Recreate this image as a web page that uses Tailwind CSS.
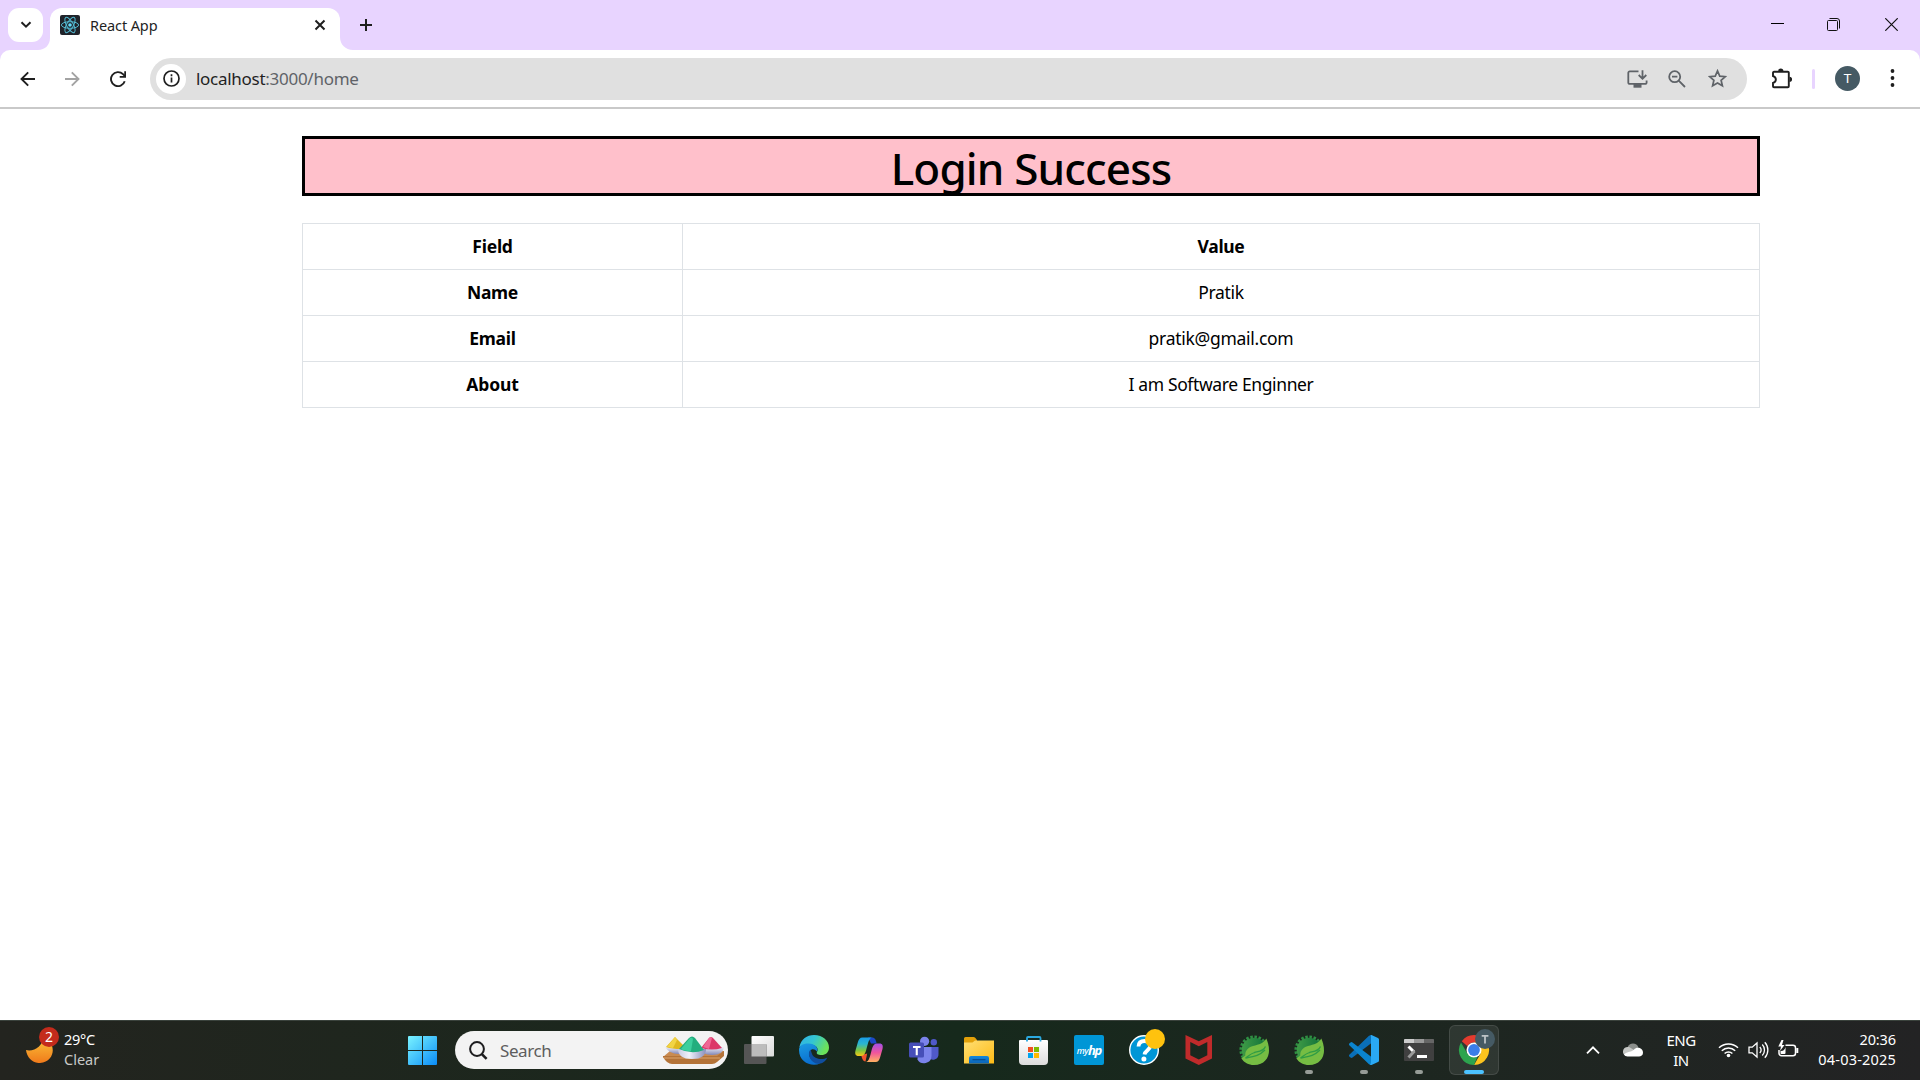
<!DOCTYPE html>
<html lang="en">
<head>
<meta charset="utf-8">
<title>React App</title>
<script src="https://cdn.jsdelivr.net/npm/@tailwindcss/browser@4"></script>
</head>
<body class="h-[1080px] w-[1920px] overflow-hidden bg-white font-['Noto_Sans','Open_Sans',sans-serif] text-black">
<div class="flex h-[1080px] flex-col">

  <!-- Tab strip -->
  <header class="flex h-[50px] bg-[#e8d4ff] text-[#1f1f1f]">
    <div class="flex w-[50px] flex-col pt-2">
      <button class="ml-2 flex h-[34px] w-[35px] items-center justify-center rounded-[11px] bg-white">
        <svg class="h-3 w-3" viewBox="0 0 12 12" fill="none" stroke="#1f1f1f" stroke-width="2"><path d="M1.5 3.2 6 7.7l4.500-4.500"/></svg>
      </button>
      <svg class="-mt-1 ml-auto h-3 w-3 shrink-0" viewBox="0 0 12 12"><path d="M12 0v12H0C7 12 12 7 12 0z" fill="#fff"/></svg>
    </div>
    <div class="mt-2 flex h-[42px] w-[290px] items-center rounded-t-[12px] bg-white pb-2 pl-[10px] pr-[14px]">
      <svg class="h-5 w-5" viewBox="0 0 20 20"><rect width="20" height="20" rx="2" fill="#20232a"/><g fill="none" stroke="#53b9d1" stroke-width="1"><ellipse cx="10" cy="10" rx="8.600" ry="3.300"/><ellipse cx="10" cy="10" rx="8.600" ry="3.300" transform="rotate(60 10 10)"/><ellipse cx="10" cy="10" rx="8.600" ry="3.300" transform="rotate(120 10 10)"/></g><circle cx="10" cy="10" r="1.800" fill="#61dafb"/></svg>
      <span class="mb-px ml-[10px] whitespace-nowrap text-[14.500px] leading-5 tracking-[-0.1px]">React App</span>
      <svg class="ml-auto h-3 w-3" viewBox="0 0 12 12" stroke="#1f1f1f" stroke-width="2"><path d="m1.500 1.500 9 9m0-9-9 9"/></svg>
    </div>
    <svg class="mt-[37px] h-[13px] w-[13px]" viewBox="0 0 13 13"><path d="M0 0v13h13C5.500 13 0 7.500 0 0z" fill="#fff"/></svg>
    <svg class="ml-[7px] mt-[19px] h-3 w-3" viewBox="0 0 12 12" stroke="#1f1f1f" stroke-width="2"><path d="M6 0v12M0 6h12"/></svg>
    <div class="ml-auto mr-[22px] mt-[18px] flex h-[13px] items-center">
      <svg class="h-[13px] w-[13px]" viewBox="0 0 13 13"><path d="M0 5h13v1H0z"/></svg>
      <svg class="ml-[43px] h-[13px] w-[13px]" viewBox="0 0 13 13" fill="none" stroke="#111"><rect x=".5" y="2.500" width="10" height="10" rx="1"/><path d="M2.500.5H10a2.500 2.500 0 0 1 2.500 2.500v7.500"/></svg>
      <svg class="ml-[45px] h-[13px] w-[13px]" viewBox="0 0 13 13" stroke="#111" stroke-width="1.200"><path d="m.3.300 12.400 12.400m0-12.400L.3 12.700"/></svg>
    </div>
  </header>

  <!-- Toolbar -->
  <div class="bg-[#e8d4ff]">
    <nav class="flex h-[59px] items-center rounded-t-[10px] border-b-2 border-[#c9c9c9] bg-white">
      <svg class="ml-[20px] h-4 w-4" viewBox="0 0 16 16" fill="none" stroke="#1f1f1f" stroke-width="1.900"><path d="M15 8H2M8.200 1.300 1.500 8l6.700 6.700"/></svg>
      <svg class="ml-[28px] h-4 w-4" viewBox="0 0 16 16" fill="none" stroke="#a3a3a3" stroke-width="1.900"><path d="M1 8h13M7.800 1.300 14.500 8l-6.700 6.700"/></svg>
      <svg class="ml-[30px] h-4 w-4" viewBox="0 0 16 16" fill="none" stroke="#1f1f1f" stroke-width="1.900"><path d="M14.700 10.200A7 7 0 1 1 13 3.200l2 2"/><path d="M15.200.300v5.600H9.700"/></svg>
      <div class="ml-[24px] flex h-[42px] w-[1597px] items-center rounded-full bg-[#e0e0e0] pl-[6px] pr-5">
        <span class="flex h-[30px] w-[30px] items-center justify-center rounded-full bg-white">
          <svg class="h-[17px] w-[17px]" viewBox="0 0 17 17" fill="none" stroke="#1f1f1f" stroke-width="1.700"><circle cx="8.500" cy="8.500" r="7.500"/><path d="M8.500 7.600v5M8.500 4.300v1.900"/></svg>
        </span>
        <span class="ml-[10px] mt-px whitespace-nowrap text-[17px] leading-6 tracking-[-0.28px] text-[#5f6368]"><span class="text-[#1f1f1f]">localhost</span>:3000/home</span>
        <svg class="ml-auto h-[18px] w-[21px]" viewBox="0 0 21 18" fill="none" stroke="#5f6368" stroke-width="1.800"><path d="M11.500 1.400H2.700A1.400 1.400 0 0 0 1.300 2.800v9.700a1.400 1.400 0 0 0 1.400 1.400h15.500a1.400 1.400 0 0 0 1.400-1.400V10.500M15.500.3v8M11.700 5l3.800 3.800L19.300 5"/><path d="M6.500 14h8v3.700h-8z" fill="#5f6368" stroke="none"/></svg>
        <svg class="ml-[20px] h-[18px] w-[18px]" viewBox="0 0 18 18" fill="none" stroke="#5f6368" stroke-width="1.800"><circle cx="6.700" cy="6.700" r="5.500"/><path d="m10.700 10.700 6.300 6.300M4 6.700h5.400"/></svg>
        <svg class="ml-[22px] h-[19px] w-[19px]" viewBox="0 0 19 19" fill="none" stroke="#5f6368" stroke-width="1.700"><path d="m9.500 1.900 2.250 5.200 5.650.5-4.300 3.700 1.300 5.500-4.900-2.900-4.900 2.900 1.300-5.500-4.300-3.700 5.650-.5z"/></svg>
      </div>
      <svg class="mb-px ml-[24px] h-[21px] w-[21px]" viewBox="0 0 21 21"><path d="M3.200 3.700h13.600a1 1 0 0 1 1 1v13.600a1 1 0 0 1-1 1H3a1 1 0 0 1-1-1v-3.400c3.800-.800 3.800-5.900 0-6.800V4.700a1 1 0 0 1 1.200-1z" fill="none" stroke="#1f1f1f" stroke-width="1.900"/><path d="M7.200 3a2.600 2.600 0 0 1 5.200 0zM18.500 8.800a2.600 2.600 0 0 1 0 5.200z" fill="#1f1f1f"/></svg>
      <span class="ml-[20px] h-5 w-[3px] rounded-full bg-[#e8d4ff]"></span>
      <span class="mb-px ml-[20px] flex h-[25px] w-[25px] items-center justify-center rounded-full bg-[#455a64] font-['Roboto',sans-serif] text-[13.500px] text-white">T</span>
      <svg class="mb-px ml-[30px] h-[18px] w-[5px]" viewBox="0 0 5 18" fill="#1f1f1f"><circle cx="2.500" cy="2" r="1.900"/><circle cx="2.500" cy="9" r="1.900"/><circle cx="2.500" cy="16" r="1.900"/></svg>
    </nav>
  </div>

  <!-- Page -->
  <main class="flex-1 pl-[302px] pt-[27px]">
    <h1 class="h-[60px] w-[1458px] border-[3px] border-black bg-[#ffc0cb] text-center text-[44px] leading-[59px] font-medium tracking-[-0.85px]">Login Success</h1>
    <table class="mt-[27px] w-[1458px] table-fixed border-collapse text-center text-[17.500px] leading-[27px]">
      <colgroup><col class="w-[380px]"><col></colgroup>
      <tbody>
        <tr class="h-[46px]"><th class="border border-[#dee2e6] tracking-[-0.25px]">Field</th><th class="border border-[#dee2e6] tracking-[-0.35px]">Value</th></tr>
        <tr class="h-[46px]"><th class="border border-[#dee2e6] tracking-[-0.35px]">Name</th><td class="border border-[#dee2e6] tracking-[-0.35px]">Pratik</td></tr>
        <tr class="h-[46px]"><th class="border border-[#dee2e6] tracking-[-0.25px]">Email</th><td class="border border-[#dee2e6] tracking-[-0.28px]">pratik@gmail.com</td></tr>
        <tr class="h-[46px]"><th class="border border-[#dee2e6] tracking-[-0.1px]">About</th><td class="border border-[#dee2e6] tracking-[-0.38px]">I am Software Enginner</td></tr>
      </tbody>
    </table>
  </main>

  <!-- Taskbar -->
  <footer class="flex h-[60px] border-t border-[#3a423c] bg-linear-to-r from-[#23241f] via-[#16291c] to-[#232324] text-white">
    <div class="flex w-[408px] pl-[26px] pt-[6px]">
      <div class="relative h-[36px] w-[32px]">
        <svg class="absolute left-0 top-[8px] h-[28px] w-[28px]" viewBox="0 0 28 28"><defs><linearGradient id="moon" x2="0" y2="1"><stop stop-color="#fbc53a"/><stop offset="1" stop-color="#f07a1b"/></linearGradient></defs><path d="M0 15c8 2 17-4 17-13 13 4 14 24-3 26C7 28.500 1 23 0 15z" fill="url(#moon)"/></svg>
        <span class="absolute left-[13px] top-0 flex h-5 w-5 items-center justify-center rounded-full bg-[#c42b1c] text-[14px] leading-5">2</span>
      </div>
      <div class="ml-[6px] mt-[2px] text-[14.500px] leading-5"><div class="tracking-[-0.3px]">29°C</div><div class="text-[#c8c9c7]">Clear</div></div>
    </div>
    <svg class="mt-[15px] h-[29px] w-[29px]" viewBox="0 0 29 29"><defs><linearGradient id="win" x2="1" y2="1"><stop stop-color="#7af3ff"/><stop offset=".5" stop-color="#43c1fb"/><stop offset="1" stop-color="#0a8cf8"/></linearGradient></defs><path d="M1 0h13v14H0V1a1 1 0 0 1 1-1zM15 0h13a1 1 0 0 1 1 1v13H15zM0 15h14v14H1a1 1 0 0 1-1-1zM15 15h14v13a1 1 0 0 1-1 1H15z" fill="url(#win)"/></svg>
    <div class="ml-[18px] mt-[10px] flex h-[38px] w-[273px] items-center rounded-full bg-[#f3f3f3] pl-[14px] pr-[3px]">
      <svg class="h-[19px] w-[19px]" viewBox="0 0 19 19" fill="none" stroke="#1d1d1f" stroke-width="2"><circle cx="8" cy="8" r="6.900"/><path d="m12.600 12.800 5 5" stroke-width="2.500"/></svg>
      <span class="ml-3 mt-px text-[17px] leading-6 tracking-[-0.4px] text-[#5d5d5d]">Search</span>
      <svg class="ml-auto h-[28px] w-[63px]" viewBox="0 0 63 28"><defs><linearGradient id="bowl" x2="0" y2="1"><stop stop-color="#f1f2fa"/><stop offset="1" stop-color="#8288b8"/></linearGradient><linearGradient id="bowl2" x2="1"><stop stop-color="#c9cce4"/><stop offset=".4" stop-color="#f0f1fa"/><stop offset="1" stop-color="#8a90bd"/></linearGradient></defs>
        <path d="M8 15h54v4l-7 5H6l-5-3z" fill="#c98b51"/><path d="M1 20h54l7-5v5l-7 6q-2 2-5 2H10q-5 0-9-7z" fill="#b47338"/><path d="M2 22h56" stroke="#dda66c"/>
        <path d="M3 11h22q-1 7-9 7t-13-7z" fill="url(#bowl)"/><path d="M4 11 13 1l9 9-3 3q-9 0-15-2z" fill="#dfb81f"/><path d="M5 11 13 1l2 3-4 8z" fill="#f2d444"/>
        <path d="M38 11h24q-1 8-12 8t-12-8z" fill="url(#bowl)"/><path d="M39 12 47 2q2-2 4 0l9 10q-10 3-21 0z" fill="#dc3768"/><path d="m41 11 6-9q2-2 3 0l-3 11z" fill="#f06794"/>
        <path d="M16 13h28q0 10-14 10T16 13z" fill="url(#bowl2)"/><path d="m17 13 10-11q3-3 6 0l9 12q-12 5-25-1z" fill="#22ae7e"/><path d="m19 13 9-11q2-1 3 1l-2 12q-7 0-10-2z" fill="#3bcf9d"/></svg>
    </div>

    <div class="ml-[3px] flex">
      <div class="w-[55px] pl-[13px] pt-[14px]"><svg class="h-[30px] w-[30px]" viewBox="0 0 30 30"><defs><linearGradient id="tv" x2="1" y2="1"><stop stop-color="#fff"/><stop offset="1" stop-color="#dadada"/></linearGradient></defs><rect x="7.500" y="1" width="22.500" height="20.500" rx="1" fill="url(#tv)"/><rect x="0" y="9" width="22.500" height="20" rx="1" fill="#555"/><path d="M7.500 9h15v12.500h-15z" fill="#bcbcbc"/></svg></div>
      <div class="w-[55px] pl-[13px] pt-[14px]"><svg class="h-[30px] w-[30px]" viewBox="0 0 30 30"><defs><linearGradient id="e1" x2="1" y2=".4"><stop stop-color="#2fb1e8"/><stop offset=".5" stop-color="#34c5d2"/><stop offset="1" stop-color="#6ce25a"/></linearGradient><linearGradient id="e2" x2=".3" y2="1"><stop stop-color="#1b9be2"/><stop offset="1" stop-color="#0a6fd0"/></linearGradient></defs><path d="M.4 12C2 4 8 0 15 0c9 0 15 6 15 12.500 0 5-3.500 7.500-7.500 7.500-3.500 0-5.500-1.300-4.500-3 2-3-.5-7-5-7-5 0-9 1-12.600 2z" fill="url(#e1)"/><path d="M0 15C0 10 5 8.600 9.500 8.600c5.500 0 9 3.400 9 6.500l-1 1.500c-1-2.600-5-3.300-6.500-.6C8 22 14 27.500 21 28.500 13 32 0 28 0 15z" fill="url(#e2)"/><path d="M11.500 14.500C7 20 13 29.500 20.500 28.800c4-.8 6.500-3.300 7.800-6.300-5 3-13.300 1.500-15.300-3.500-.8-2-.8-3.500-1.500-4.500z" fill="#104e9e"/></svg></div>
      <div class="w-[55px] pl-[13px] pt-[14px]"><svg class="h-[30px] w-[30px]" viewBox="0 0 30 30"><defs><linearGradient id="c1" x2="0" y2="1"><stop stop-color="#1a9de8"/><stop offset=".35" stop-color="#2bb6d0"/><stop offset=".7" stop-color="#7fc63e"/><stop offset="1" stop-color="#f7c815"/></linearGradient><linearGradient id="c2" x2="0" y2="1"><stop stop-color="#a44fe8"/><stop offset=".5" stop-color="#f0559c"/><stop offset="1" stop-color="#ffb261"/></linearGradient></defs><path d="M14 2.500h4c3 0 3.800 2.200 4.600 6H17z" fill="#1c48c8"/><path d="M11.500 26.500c-2.600 0-3.500-3-4.300-6.500l6-1.500z" fill="#f0552e"/><path d="M8.500 2.500h9.300c-2.500 1-3.300 4-4.300 7.500-1.300 4.500-2 11-6.500 11H4.500c-3 0-3.800-2.200-3-5.500l2.300-8c.8-3 2-5 4.700-5z" fill="url(#c1)"/><path d="M21.500 27h-9.300c2.500-1 3.300-4 4.300-7.500 1.300-4.500 2-11 6.500-11h2.500c3 0 3.800 2.200 3 5.500l-2.300 8c-.8 3-2 5-4.700 5z" fill="url(#c2)"/></svg></div>
      <div class="w-[55px] pl-[13px] pt-[14px]"><svg class="h-[30px] w-[30px]" viewBox="0 0 30 30"><circle cx="24.800" cy="7.300" r="3.200" fill="#5059c9"/><circle cx="15.600" cy="6.300" r="4.600" fill="#7b83eb"/><path d="M20 12h9.500v7a5.500 5.500 0 0 1-9.500 4z" fill="#5059c9"/><path d="M9 12h13.500v9a7.500 7.500 0 0 1-14 3.500z" fill="#7b83eb"/><rect x="0" y="7.500" width="15" height="15" rx="1.500" fill="#464eb8"/><path d="M4 11h7.500v1.900H8.800v7.300H6.700v-7.300H4z" fill="#fff"/></svg></div>
      <div class="w-[55px] pl-[13px] pt-[14px]"><svg class="h-[30px] w-[30px]" viewBox="0 0 30 30"><defs><linearGradient id="f1" x2="1" y2="1"><stop stop-color="#ffdf74"/><stop offset="1" stop-color="#fdbb16"/></linearGradient><linearGradient id="f2" x2="0" y2="1"><stop stop-color="#1388dc"/><stop offset="1" stop-color="#0b63b6"/></linearGradient></defs><path d="M0 3.500A1.500 1.500 0 0 1 1.500 2h8q1 0 1.700.8l1.800 2.200v4H0z" fill="#e2a009"/><path d="M0 7.500h8.500l2.500-2h19v23H0z" fill="url(#f1)"/><path d="M5 28.500V23q0-2 2-2h16q2 0 2 2v5.500z" fill="url(#f2)"/><path d="M8.500 24.700h13" stroke="#084a8e" stroke-width="1.200"/></svg></div>
      <div class="w-[55px] pl-[13px] pt-[14px]"><svg class="h-[30px] w-[30px]" viewBox="0 0 30 30"><defs><linearGradient id="st" x2="0" y2="1"><stop stop-color="#fff"/><stop offset="1" stop-color="#dcdcdc"/></linearGradient></defs><path d="M1 5h27a1 1 0 0 1 1 1v20q0 4-4 4H4q-4 0-4-4V6a1 1 0 0 1 1-1z" fill="url(#st)"/><path d="M8 6.500V3q0-1 1-1h11.500q1 0 1 1v3.500" fill="none" stroke="#2ba9e0" stroke-width="1.800"/><path d="M9 12h5v5H9z" fill="#f25022"/><path d="M15 12h5v5h-5z" fill="#7fba00"/><path d="M9 18h5v5H9z" fill="#00a4ef"/><path d="M15 18h5v5h-5z" fill="#ffb900"/></svg></div>
      <div class="w-[55px] pl-[13px] pt-[14px]"><div class="flex h-[30px] w-[30px] items-center justify-center rounded-[2px] bg-[#0096d6]"><span class="text-[9px] leading-none font-medium tracking-[-0.6px] italic">my</span><span class="text-[13px] leading-none font-bold tracking-[-1.2px] italic">hp</span></div></div>
      <div class="w-[55px] pl-[13px] pt-[14px]"><svg class="h-[30px] w-[30px] overflow-visible" viewBox="0 0 30 30"><circle cx="15" cy="15" r="14.300" fill="#0096d6" stroke="#fff" stroke-width="1.400"/><path d="M9.500 11.500c.2-4 3-5.500 6-5.500 4 0 5.800 2.200 5.800 4.800 0 4-5.300 4.600-5.800 8.700" fill="none" stroke="#fff" stroke-width="3.800"/><circle cx="14.900" cy="24" r="2.500" fill="#fff"/><circle cx="26" cy="4" r="10" fill="#ffc20e"/></svg></div>
      <div class="w-[55px] pl-[13px] pt-[14px]"><svg class="h-[30px] w-[30px]" viewBox="0 0 30 30"><path d="m1.500 0 13.300 6.200L28 0v23.500L14.800 30 1.500 23.500zM6.300 6.900v13.300l8.500 4.300 8.500-4.300V6.900l-8.500 4.300z" fill="#c02b2b" fill-rule="evenodd"/></svg></div>
      <div class="w-[55px] pl-[13px] pt-[14px]"><svg class="h-[30px] w-[30px]" viewBox="0 0 30 30"><defs><linearGradient id="sp" x2="1"><stop stop-color="#3f9b46"/><stop offset="1" stop-color="#10723a"/></linearGradient></defs><circle cx="15" cy="15" r="12.600" fill="none" stroke="#2f8f43" stroke-width="4" stroke-dasharray="2.400 1.560"/><circle cx="15" cy="15" r="12.300" fill="url(#sp)"/><path d="M27.300 3.500C25 8 20 9.500 14 11 7.500 13 6 17 6.300 20.500 4.500 22 3 23 2.300 23.200 5 27.500 9.500 30 15 30c10 0 15-7 15-14.500 0-5-1.300-9-2.700-12z" fill="#76bd43"/><path d="M26.500 11.500c-2 4.500-6 4.700-11 6-4 1.200-6 3.500-9 5.500 7-1.500 13-1.500 19.500-8" fill="none" stroke="#2f9c45" stroke-width="1.300"/></svg></div>
      <div class="w-[55px] pl-[13px] pt-[14px]"><svg class="h-[30px] w-[30px]" viewBox="0 0 30 30"><circle cx="15" cy="15" r="12.600" fill="none" stroke="#2f8f43" stroke-width="4" stroke-dasharray="2.400 1.560"/><circle cx="15" cy="15" r="12.300" fill="url(#sp)"/><path d="M27.300 3.500C25 8 20 9.500 14 11 7.500 13 6 17 6.300 20.500 4.500 22 3 23 2.300 23.200 5 27.500 9.500 30 15 30c10 0 15-7 15-14.500 0-5-1.300-9-2.700-12z" fill="#76bd43"/><path d="M26.500 11.500c-2 4.500-6 4.700-11 6-4 1.200-6 3.500-9 5.500 7-1.500 13-1.500 19.500-8" fill="none" stroke="#2f9c45" stroke-width="1.300"/></svg><div class="ml-[11px] mt-[5px] h-1 w-2 rounded-full bg-[#969c97]"></div></div>
      <div class="w-[55px] pl-[13px] pt-[14px]"><svg class="h-[30px] w-[30px]" viewBox="0 0 30 30"><path d="M22.500 8 3.500 22.500q-1 .8-2 0l-1.200-1q-.8-.8 0-1.700L20 .8 22.500 0z" fill="#0a6fb8"/><path d="M22.500 22 3.500 7.500q-1-.8-2 0l-1.200 1q-.8.800 0 1.700L20 29.200l2.500.8z" fill="#0b84ce"/><path d="M21.500.2 22.500 0l6.500 3q1 .5 1 1.500v21q0 1-1 1.500l-6.500 3-2-.5q1.500-.3 1.500-2v-25q0-1.800-.5-2.300z" fill="#2aa9f5"/></svg><div class="ml-[11px] mt-[5px] h-1 w-2 rounded-full bg-[#969c97]"></div></div>
      <div class="w-[55px] pl-[13px] pt-[14px]"><svg class="h-[30px] w-[30px]" viewBox="0 0 30 30"><rect y="4" width="30" height="22" rx="1" fill="#404040"/><path d="M1 4h9v4H0V5a1 1 0 0 1 1-1z" fill="#ccc"/><path d="M10 4h10v4H10z" fill="#999"/><path d="M20 4h9a1 1 0 0 1 1 1v3H20z" fill="#666"/><path d="m4.500 11.500 5.500 5.500" stroke="#fff" stroke-width="3"/><path d="m10.500 16-6 6.500" stroke="#999" stroke-width="3"/><path d="M13 20h10v3H13z" fill="#fff"/></svg><div class="ml-[11px] mt-[5px] h-1 w-2 rounded-full bg-[#969c97]"></div></div>
      <div class="ml-[3px] mt-1 h-[50px] w-[50px] rounded-[6px] border border-white/10 bg-white/8 pl-[9px] pt-[9px]"><svg class="h-[30px] w-[30px] overflow-visible" viewBox="0 0 30 30"><path d="M15 0a15 15 0 0 1 13 7.500H15a7.500 7.500 0 0 0-6.500 3.700L2.800 6.200A15 15 0 0 1 15 0z" fill="#e33b2e"/><path d="M2 7.500 8.500 18.700A7.500 7.500 0 0 0 15 22.500L15 30A15 15 0 0 1 2 7.500z" fill="#2da44e"/><path d="M21.500 18.700 15 30A15 15 0 0 0 28 7.500H15z" fill="#fcc31e"/><path d="m8.500 18.700 6.500 3.800 3.500-.8L15 30l-6-4z" fill="#2da44e"/><circle cx="15" cy="15" r="7.500" fill="#fff"/><circle cx="15" cy="15" r="5.900" fill="#3b7de9"/><circle cx="26" cy="4" r="10" fill="#455a64"/><path d="M22.700 0h6.700v1.700h-2.500V8.500h-1.800V1.700h-2.400z" fill="#bcc3c7"/></svg><div class="mt-[5px] ml-[5px] h-1 w-5 rounded-full bg-[#4cc2ff]"></div></div>
    </div>

    <div class="ml-auto mr-[24px] flex items-start">
      <svg class="mt-[24px] h-[10px] w-[14px]" viewBox="0 0 14 10" fill="none" stroke="#fff" stroke-width="1.800"><path d="m1 8.300 6-6 6 6"/></svg>
      <svg class="ml-[23px] mt-[22px] h-[14px] w-[20px]" viewBox="0 0 20 14"><path d="M4.500 4.500C6-1 14-1 15.500 4.500l-6 3z" fill="#8b8e8b"/><path d="M0 9.500C-.5 5 3.500 3 7 4.500l8 5L4 13Q.5 12.500 0 9.500z" fill="#c5c7c5"/><path d="M1 11.500C4 8.500 9 9 11 6.500c2.500-3 9-2 9 3.200 0 2.600-2 3.800-4 3.800H4.500Q2 13.500 1 11.500z" fill="#fff"/></svg>
      <div class="ml-[23px] mt-[9px] w-[30px] text-center text-[15px] leading-5 tracking-[-0.5px] whitespace-nowrap"><div>ENG</div><div>IN</div></div>
      <svg class="ml-[22px] mt-[21px] h-[16px] w-[21px]" viewBox="0 0 21 16" fill="none" stroke="#fff" stroke-width="1.500"><path d="M1 5.800a13.500 13.500 0 0 1 19 0M3.800 8.700a9.500 9.500 0 0 1 13.400 0M6.600 11.500a5.500 5.500 0 0 1 7.800 0"/><circle cx="10.500" cy="13.500" r="1.800" fill="#fff" stroke="none"/></svg>
      <svg class="ml-[9px] mt-[20px] h-[18px] w-[21px]" viewBox="0 0 21 18" fill="none" stroke="#fff" stroke-width="1.300"><path d="M1 6.200h3.200L9 2v14l-4.800-4.200H1z"/><path d="M11.800 6a4.500 4.500 0 0 1 0 6M14.300 3.500a8 8 0 0 1 0 11M16.800 1.200a11.500 11.500 0 0 1 0 15.600"/></svg>
      <svg class="ml-[9px] mt-[19px] h-[17px] w-[21px]" viewBox="0 0 21 17" fill="none" stroke="#fff" stroke-width="1.500"><path d="M7.500 5.200H15a2.500 2.500 0 0 1 2.500 2.500v5.600a2.500 2.500 0 0 1-2.500 2.500H3.500a2.500 2.500 0 0 1-2.500-2.500V10"/><path d="M3.500 0 .3 6.500H3L2 11l4.500-6H4L5.500 0zM18.300 8h2v5h-2zM2.500 13.500V11q4 .5 5-4V13q0 1-1 1H3z" fill="#fff" stroke="none"/></svg>
      <div class="ml-[19px] mt-[8px] w-[78px] text-right text-[14.500px] leading-5 whitespace-nowrap"><div class="tracking-[-0.1px]">20:36</div><div class="tracking-[0.2px]">04-03-2025</div></div>
    </div>
  </footer>
</div>
</body>
</html>
